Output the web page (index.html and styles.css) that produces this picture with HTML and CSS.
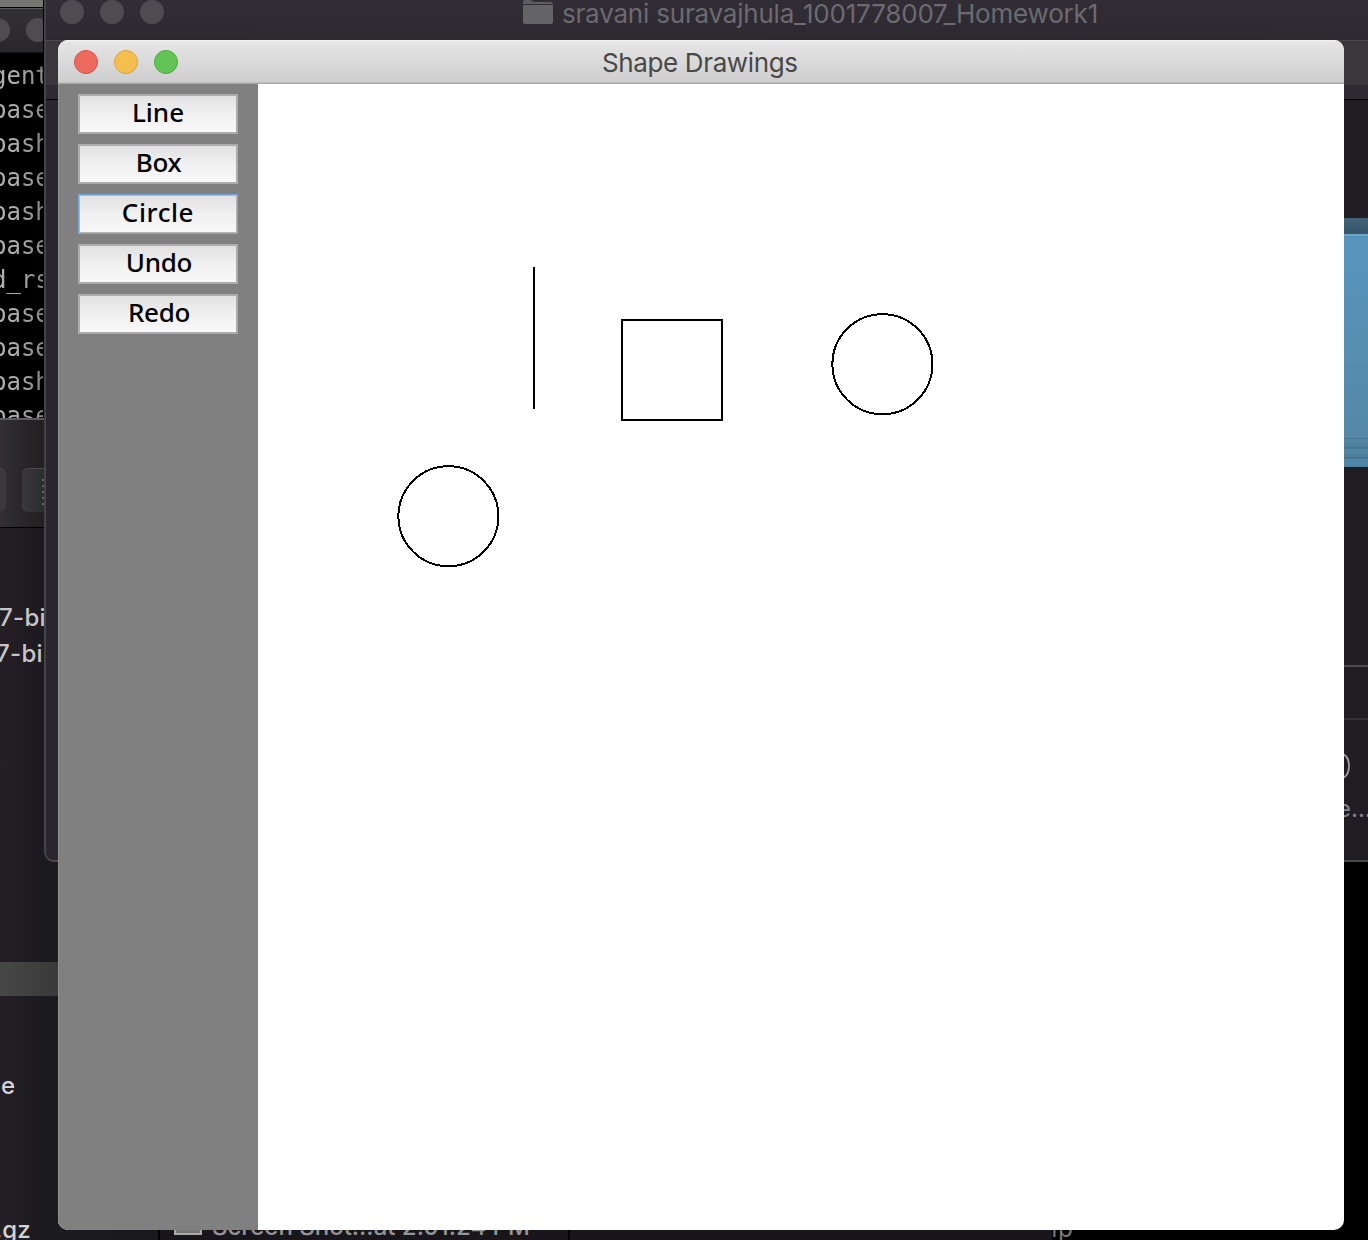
FILE: index.html
```html
<!DOCTYPE html>
<html lang="en">
<head>
<meta charset="utf-8">
<title>Shape Drawings</title>
<link rel="stylesheet" href="styles.css">
</head>
<body>
<div class="desktop">
  <section class="window terminal">
    <div class="terminal-bar"><i class="dim-dot"></i><i class="dim-dot"></i></div>
    <pre class="terminal-text">gent
base
bash
base
bash
base
d_rs
base
base
bash
base</pre>
  </section>

  <section class="window files">
    <div class="files-toolbar">
      <span class="tool"></span>
      <span class="tool"><svg class="list-icon" width="10" height="30"><path d="M0 3h2M5 3h5M0 9h2M5 9h5M0 15h2M5 15h5M0 21h2M5 21h5M0 27h2M5 27h5"/></svg></span>
    </div>
    <div class="files-list">
      <span class="file bi-one">7-bi</span>
      <span class="file bi-two">7-bi</span>
      <span class="selected-row"></span>
      <span class="file tail-e">e</span>
      <span class="file tail-gz">.gz</span>
    </div>
  </section>

  <section class="window columns">
    <div class="column first"><span class="thumb"></span><span class="shot">Screen Shot...at 2.01.24 PM</span></div>
    <div class="column"></div>
  </section>
  <span class="fragment">ip</span>

  <section class="window finder">
    <header class="finder-title">
      <div class="lights dim"><i class="dim-dot"></i><i class="dim-dot"></i><i class="dim-dot"></i></div>
      <svg class="folder-icon" width="30" height="24" viewBox="0 0 30 24"><path fill="#5e5d60" d="M0 4V2Q0 0 2 0h5l4 2h17q2 0 2 2z"/><path fill="#646366" d="M0 5h30v17q0 2-2 2H2q-2 0-2-2z"/></svg>
      <span class="finder-name">sravani suravajhula_1001778007_Homework1</span>
    </header>
    <div class="finder-tools"></div>
    <div class="finder-body">
      <div class="blue-folder"></div>
      <div class="path-bar"></div>
      <div class="status">
        <svg class="ring" width="14" height="28"><path d="M-1 2C7 6 7 22 -1 26"/></svg>
        <span class="ellipsis">e...</span>
      </div>
    </div>
  </section>

  <main class="window app">
    <header class="app-title">
      <div class="lights"><i class="dot red"></i><i class="dot yellow"></i><i class="dot green"></i></div>
      <h1>Shape Drawings</h1>
    </header>
    <div class="app-body">
      <nav class="tools">
        <button class="btn line">Line</button>
        <button class="btn box">Box</button>
        <button class="btn circle focused">Circle</button>
        <button class="btn undo">Undo</button>
        <button class="btn redo">Redo</button>
      </nav>
      <svg class="canvas" width="1086" height="1146" viewBox="258 84 1086 1146">
        <path d="M534 267V409"/>
        <rect x="622" y="320" width="100" height="100"/>
        <circle cx="882.4" cy="364.2" r="50"/>
        <circle cx="448.4" cy="516.2" r="50"/>
      </svg>
    </div>
  </main>
</div>
</body>
</html>
```
FILE: styles.css
```css
* { box-sizing: border-box; }
body { margin: 0; background: #000; font-family: Inter, sans-serif; }
.desktop { position: relative; width: 1368px; height: 1240px; overflow: hidden; background: #000; }
.window { position: absolute; overflow: hidden; }

/* terminal behind, left edge */
.terminal { left: 0; top: 0; width: 44px; height: 418px; background: #000; border-right: 1px solid #000; }
.terminal-bar { height: 53px; padding-top: 18px; display: flex; gap: 16px; border-bottom: 1px solid #171517;
  background: linear-gradient(#74766f 0 7px, #000 7px 8px, #5b5b5b 8px 9px, #343136 9px, #29272b); }
.terminal-bar .dim-dot { margin-left: -14px; }
.terminal-bar .dim-dot + .dim-dot { margin-left: 0; }
.dim-dot { flex: none; width: 24px; height: 24px; border-radius: 50%; background: #4e4c51; }
.terminal-text { margin: 6px 0 0 -8px; font: 24px/34px "DejaVu Sans Mono", monospace; color: #b0b0ae;
  -webkit-mask-image: linear-gradient(90deg, #000 40%, rgba(0,0,0,.75)); -webkit-mask-size: 52px 100%; }

/* file browser, left edge */
.files { left: 0; top: 418px; width: 160px; height: 822px; background: linear-gradient(90deg, #241f25, #1b1a1e 44px, #1a191d); }
.files-toolbar { display: flex; gap: 16px; height: 110px; padding-top: 48px; border-top: 2px solid #5c5a5e; border-bottom: 1px solid #000;
  background: linear-gradient(90deg, #322e33, #201f22 44px); }
.tool { flex: none; width: 60px; height: 44px; border-radius: 6px; background: linear-gradient(90deg, #3a383c, #2c2b2e 22px); border-top: 1px solid #4a484c; }
.tool:first-child { width: 6px; border-radius: 0 6px 6px 0; background: #3a383c; }
.list-icon { display: block; margin: 8px 0 0 20px; fill: none; stroke: #656467; stroke-width: 2; }
.files-list { position: relative; height: 712px; font-size: 24px; line-height: 30px; color: #d5d3d5; font-weight: 500; }
.file { position: absolute; white-space: nowrap; }
.bi-one { left: -1px; top: 75px; letter-spacing: .3px; color: #c7c5c6; }
.bi-two { left: -4px; top: 111px; letter-spacing: .3px; color: #c7c5c6; }
.selected-row { position: absolute; left: 0; top: 434px; width: 60px; height: 34px; background: linear-gradient(90deg, #474747, #393939); }
.tail-e { left: 1px; top: 543px; }
.tail-gz { left: -5px; top: 687px; }

/* column view under the main window */
.columns { left: 158px; top: 1180px; width: 894px; height: 60px; display: flex; background: #18161a; border-left: 2px solid #000; }
.column { flex: 1; }
.first { flex: none; width: 410px; border-right: 2px solid #000; display: flex; align-items: flex-start; padding: 31px 0 0 14px; }
.thumb { flex: none; width: 28px; height: 24px; background: #777; border: 2px solid #aaa; }
.shot { flex: none; margin-left: 10px; margin-top: 1px; font-size: 24px; font-weight: 500; line-height: 30px; letter-spacing: 0; white-space: nowrap; color: #949396; }
.fragment { position: absolute; left: 1051px; top: 1214px; font: 24px/30px "DejaVu Sans", sans-serif; color: #777; }

/* finder window */
.finder { left: 44px; top: -20px; width: 1400px; height: 882px; border: 1px solid #56545a; border-left: 2px solid #45434a; border-bottom: 2px solid #4a484d; border-radius: 10px; background: #1f1d22; display: flex; flex-direction: column; }
.finder-title { flex: none; height: 59px; padding-top: 19px; position: relative; display: flex; background: linear-gradient(#323036, #2c2a30); }
.lights { display: flex; gap: 16px; }
.finder .lights { padding-left: 14px; }
.folder-icon { position: absolute; left: 477px; top: 19px; }
.finder-name { position: absolute; left: 516px; top: 17px; font-size: 26px; line-height: 32px; letter-spacing: -.2px; color: #6c6a70; white-space: nowrap; }
.finder-tools { flex: none; height: 60px; border-top: 1px solid #4b494e; border-bottom: 1px solid #000; background: linear-gradient(#39373c 0 44px, #2d2b31 44px); }
.finder-body { flex: 1; padding-top: 118px; background: linear-gradient(90deg, #29272d 14px, #1f1d22 14px 1298px, #201e23 1322px); }
.blue-folder { height: 249px; margin-left: 1200px;
  background: linear-gradient(#426278 0, #34546a 16px, #70a6c5 16px, #70a6c5 18px, #5795bd 18px, #5588a7 220px, #47758f 220px, #5386a1 221px, #4e819d 229px, #3c6780 230px, #5388a5 231px, #4c7f9b 239px, #3c6780 240px, #5388a5 241px, #4c83a3 248px); }
.path-bar { margin: 198px 0 0 14px; height: 55px; border-top: 2px solid #4d4b50; border-bottom: 2px solid #343237; }
.status { display: flex; flex-direction: column; padding: 32px 0 0 1298px; }
.ring { fill: none; stroke: #a09fa1; stroke-width: 1.8; }
.ellipsis { margin-left: -7px; margin-top: 14px; font-size: 24px; line-height: 30px; color: #858387; }

/* drawing app */
.app { left: 58px; top: 40px; width: 1286px; height: 1190px; border-radius: 10px; background: #fff; display: flex; flex-direction: column; }
.app-title { flex: none; height: 44px; position: relative; padding: 10px 16px; background: linear-gradient(#f4f4f4 0, #e5e5e5 2px, #cecece 42px); border-bottom: 1px solid #a8a8a8; box-shadow: inset 0 -1px #bdbdbd; }
.dot { width: 24px; height: 24px; border-radius: 50%; border: 1px solid; }
.red { background: #ed6a5e; border-color: #d9514a; }
.yellow { background: #f5bf4f; border-color: #dca23b; }
.green { background: #61c454; border-color: #4eaa42; }
h1 { position: absolute; left: 544px; top: 7px; margin: 0; font-weight: 400; font-size: 26px; line-height: 32px; letter-spacing: -.37px; color: #484848; white-space: nowrap; }
.app-body { flex: 1; display: flex; }
.tools { flex: none; width: 200px; background: #808080; border-left: 1px solid #919191; padding: 10px 20px 0 19px; display: flex; flex-direction: column; gap: 10px; }
.btn { flex: none; height: 40px; padding: 0 0 5px; border: 2px solid #acacac; border-radius: 0; background: linear-gradient(#e1e1e1, #f0f0f0 50%, #f8f8f8); font: 500 26px/32px "Noto Sans", sans-serif; color: #000; }
.circle { letter-spacing: .6px; }
.undo, .redo { letter-spacing: -.3px; padding-left: 2px; }
.box { letter-spacing: -.3px; padding-left: 1px; }
.focused { border-color: #75a5da; border-width: 1px; padding: 1px 1px 6px; box-shadow: inset 0 0 0 1px #b5b5b5; }
.canvas { display: block; fill: none; stroke: #000; stroke-width: 2; shape-rendering: crispEdges; }
```
